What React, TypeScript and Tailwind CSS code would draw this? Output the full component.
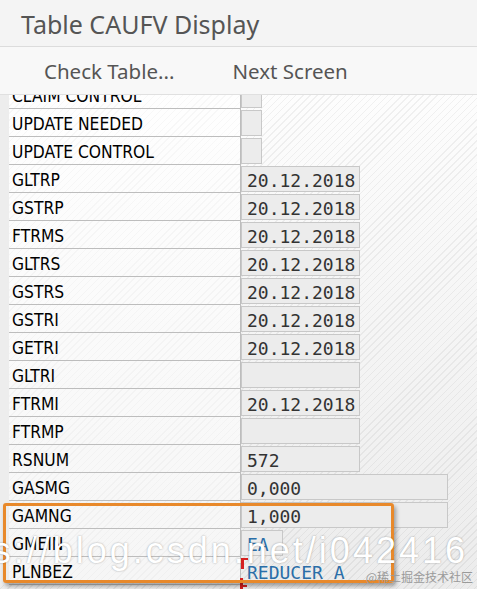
import React from 'react';

type Row = { label: string; value?: string; w: number; blue?: boolean; box?: boolean };

const rows: Row[] = [
  { label: 'CLAIM CONTROL', w: 21 },
  { label: 'UPDATE NEEDED', w: 21 },
  { label: 'UPDATE CONTROL', w: 21 },
  { label: 'GLTRP', value: '20.12.2018', w: 119 },
  { label: 'GSTRP', value: '20.12.2018', w: 119 },
  { label: 'FTRMS', value: '20.12.2018', w: 119 },
  { label: 'GLTRS', value: '20.12.2018', w: 119 },
  { label: 'GSTRS', value: '20.12.2018', w: 119 },
  { label: 'GSTRI', value: '20.12.2018', w: 119 },
  { label: 'GETRI', value: '20.12.2018', w: 119 },
  { label: 'GLTRI', w: 119 },
  { label: 'FTRMI', value: '20.12.2018', w: 119 },
  { label: 'FTRMP', w: 119 },
  { label: 'RSNUM', value: '572', w: 119 },
  { label: 'GASMG', value: '0,000', w: 207 },
  { label: 'GAMNG', value: '1,000', w: 207 },
  { label: 'GMEIN', value: 'EA', w: 42, blue: true },
  { label: 'PLNBEZ', value: 'REDUCER_A', w: 207, blue: true, box: false },
];

export default function App() {
  return (
    <div className="relative w-[477px] h-[589px] overflow-hidden bg-[#fbfbfb] font-['Noto_Sans',sans-serif]">
      <header className="h-[47px] bg-[#f4f4f4] border-b border-[#dcdcdc] flex items-center pl-[21px]">
        <h1 className="text-[25px] text-[#555] leading-none mt-[2px]">Table CAUFV Display</h1>
      </header>
      <nav className="h-[48px] bg-[#f8f8f8] border-b border-[#e0e0e0] flex items-center gap-[58px] pl-[44px]">
        <span className="text-[20.5px] text-[#555] mt-[1px]">Check Table...</span>
        <span className="text-[20.5px] text-[#555] mt-[1px]">Next Screen</span>
      </nav>

      <div className="h-[494px] overflow-hidden bg-[repeating-linear-gradient(135deg,transparent_0px,transparent_4px,rgba(0,0,0,0.05)_4px,rgba(0,0,0,0.05)_5px),linear-gradient(to_bottom,#fdfdfd,#ececec)]">
        <div className="-mt-[14px] border-l-[9px] border-[#ededed]">
          {rows.map((r) => (
            <div key={r.label} className="flex h-[28px]">
              <div className="w-[232px] shrink-0 border-b border-r border-[#bdbdbd] bg-white/50 pl-[3px] pt-[4px] flex items-center font-['DejaVu_Sans_Condensed','DejaVu_Sans',sans-serif] text-[17.3px] text-black leading-none">
                {r.label}
              </div>
              {r.box === false ? (
                <div className="relative flex items-center pl-[6px] pt-[4px]">
                  <span className="absolute left-0 top-[1px] w-[3px] h-[11px] bg-[#d62020]" />
                  <span className="absolute left-0 top-[1px] w-[7px] h-[2px] bg-[#d62020]" />
                  <span className="font-['DejaVu_Sans_Mono',monospace] text-[18px] text-[#2a6ea8] leading-none">
                    {r.value}
                  </span>
                </div>
              ) : (
                <div
                  className="mt-[1px] h-[26px] bg-[#ececec] border border-[#c8c8c8] flex items-center pl-[5px] pt-[3px]"
                  style={{ width: r.w }}
                >
                  <span
                    className={`font-['DejaVu_Sans_Mono',monospace] text-[18px] leading-none ${
                      r.blue ? 'text-[#2a6ea8]' : 'text-[#333]'
                    }`}
                  >
                    {r.value}
                  </span>
                </div>
              )}
            </div>
          ))}
        </div>
      </div>

      <div className="absolute left-[240px] top-[578px] w-[3px] h-[11px] bg-[#d62020]" />
      <div className="absolute left-[240px] top-[585px] w-[7px] h-[2px] bg-[#d62020]" />

      <div className="absolute left-[3px] top-[503px] w-[391px] h-[80px] border-[3px] border-[#e8892b] rounded-[3px] shadow-[2px_3px_4px_rgba(0,0,0,0.35)]" />

      <div className="absolute right-[9px] top-[533px] whitespace-nowrap font-['Liberation_Sans',sans-serif] text-[36px] tracking-[3px] leading-none text-white [text-shadow:0_0_2px_rgba(0,0,0,0.35)]">
        https://blog.csdn.net/i042416
      </div>

      <div className="absolute right-[4px] top-[571px] whitespace-nowrap font-['Noto_Sans_CJK_SC',serif] text-[12px] leading-none text-[#9a9a9a]">
        @稀土掘金技术社区
      </div>
    </div>
  );
}
